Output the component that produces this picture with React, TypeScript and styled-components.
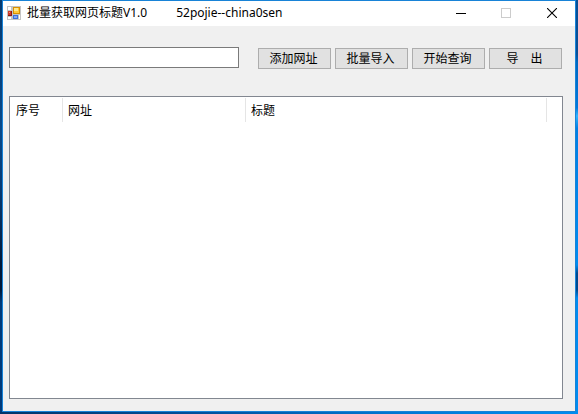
import React, { useState } from "react";
import styled, { createGlobalStyle } from "styled-components";

const GlobalStyle = createGlobalStyle`
  * { box-sizing: border-box; }
  html, body { margin: 0; padding: 0; }
  body, button, input { font-family: "Noto Sans CJK SC", sans-serif; font-size: 12px; color: #000; }
`;

const Desktop = styled.div`
  display: flex;
  min-height: 100vh;
  padding: 0 2px 2px;
  background:
    linear-gradient(90deg, #003468, #00509c 35%, #0078d4 70%, #008cf0) bottom / 100% 2px no-repeat,
    linear-gradient(180deg, #0a4f96 0 13%, #0068c0 15%, #0078dc 26%, #30b4ff 28%, #0080e4 31%, #008cf0 64%, #004a90 66%, #004a90 70%, #008cf0 72%) right / 2px 100% no-repeat,
    linear-gradient(180deg, #063a70, #07498a 32%, #063a74 45%, #001838 64%, #001838 70%, #003a7a 73%, #003a7a) left / 2px 100% no-repeat;
`;

const Window = styled.main`
  flex: 1;
  min-width: 0;
  display: flex;
  flex-direction: column;
  border: 1px solid #1883d7;
  background: #f0f0f0;
`;

const TitleBar = styled.header`
  display: flex;
  align-items: center;
  height: 25px;
  padding: 0 0 1px 4px;
  background: #fff;
`;

const Title = styled.h1`
  flex: 1;
  display: flex;
  gap: 29px;
  margin: 0 0 0 6px;
  font-size: 12px;
  font-weight: 400;
  line-height: 24px;
  white-space: nowrap;
  font-family: "Noto Sans", "Noto Sans CJK SC", sans-serif;
`;

const CaptionButton = styled.button`
  display: grid;
  place-items: center;
  width: 46px;
  height: 24px;
  padding: 0;
  border: 0;
  background: transparent;
`;

const Client = styled.div`
  flex: 1;
  display: flex;
  flex-direction: column;
  gap: 27px;
  padding: 21px 12px 12px 6px;
`;

const Toolbar = styled.form`
  display: flex;
  align-items: flex-start;
  gap: 4px;
  padding-right: 1px;
`;

const UrlInput = styled.input`
  flex: 1;
  min-width: 80px;
  height: 21px;
  margin-right: 15px;
  padding: 0 4px;
  border: 1px solid #7a7a7a;
  border-radius: 0;
  background: #fff;
  outline: none;
`;

const ToolButton = styled.button`
  width: 73px;
  height: 21px;
  margin-top: 1px;
  padding: 0 2px 2px 0;
  border: 1px solid #adadad;
  border-radius: 0;
  background: #e1e1e1;
  line-height: 17px;
  white-space: pre;
`;

const ListView = styled.div`
  flex: 1;
  padding: 1px;
  border: 1px solid #828790;
  background: #fff;
`;

const Table = styled.table`
  width: 100%;
  table-layout: fixed;
  border-collapse: separate;
  border-spacing: 0;
`;

const HeaderCell = styled.th<{ $width?: number; $last?: boolean }>`
  width: ${(p) => (p.$width ? `${p.$width}px` : "auto")};
  height: 24px;
  padding: 0 0 0 ${(p) => (p.$last ? 0 : 5)}px;
  border-right: ${(p) => (p.$last ? "0" : "1px solid #e5e5e5")};
  font-weight: 400;
  line-height: 24px;
  text-align: left;
`;

const FormIcon = () => (
  <svg width="14" height="14" viewBox="0 0 14 14" shapeRendering="crispEdges" aria-hidden="true">
    <path fill="#c4c4c4" d="M0 0h14v14H0z" />
    <path fill="#fff" d="M1 1h3v3H1zM1 11h3v2H1zM12 9h1v4h-1z" />
    <path fill="#8c1810" d="M1 5h4v5H1z" />
    <path fill="#d03c28" d="M1 5h3v4H1z" />
    <path fill="#f08c78" d="M2 6h1v1H2z" />
    <path fill="#d89000" d="M6 1h7v7H6z" />
    <path fill="#ffc838" d="M7 2h5v5H7z" />
    <path fill="#ffe88c" d="M7 2h4v3H7z" />
    <path fill="#3c70d8" d="M6 9h5v4H6z" />
    <path fill="#84a8f4" d="M7 10h3v2H7z" />
  </svg>
);

const actions = ["添加网址", "批量导入", "开始查询", "导\u3000出"];

export default function App() {
  const [url, setUrl] = useState("");
  return (
    <>
      <GlobalStyle />
      <Desktop>
        <Window>
          <TitleBar>
            <FormIcon />
            <Title>
              <span>批量获取网页标题V1.0</span>
              <span>52pojie--china0sen</span>
            </Title>
            <CaptionButton type="button" aria-label="最小化">
              <svg width="12" height="10" shapeRendering="crispEdges"><path d="M2 5h10v1H2z" /></svg>
            </CaptionButton>
            <CaptionButton type="button" aria-label="最大化" disabled>
              <svg width="10" height="10" shapeRendering="crispEdges"><path d="M.5.5h9v9h-9z" fill="none" stroke="#ccc" /></svg>
            </CaptionButton>
            <CaptionButton type="button" aria-label="关闭">
              <svg width="10" height="10"><path d="M0 0l10 10M10 0L0 10" fill="none" stroke="#000" strokeWidth="1.1" /></svg>
            </CaptionButton>
          </TitleBar>
          <Client>
            <Toolbar onSubmit={(e) => e.preventDefault()}>
              <UrlInput aria-label="网址" value={url} onChange={(e) => setUrl(e.target.value)} />
              {actions.map((label) => (
                <ToolButton key={label} type="button">{label}</ToolButton>
              ))}
            </Toolbar>
            <ListView>
              <Table>
                <thead>
                  <tr>
                    <HeaderCell scope="col" $width={52}>序号</HeaderCell>
                    <HeaderCell scope="col" $width={183}>网址</HeaderCell>
                    <HeaderCell scope="col" $width={301}>标题</HeaderCell>
                    <HeaderCell as="td" $last />
                  </tr>
                </thead>
                <tbody />
              </Table>
            </ListView>
          </Client>
        </Window>
      </Desktop>
    </>
  );
}
